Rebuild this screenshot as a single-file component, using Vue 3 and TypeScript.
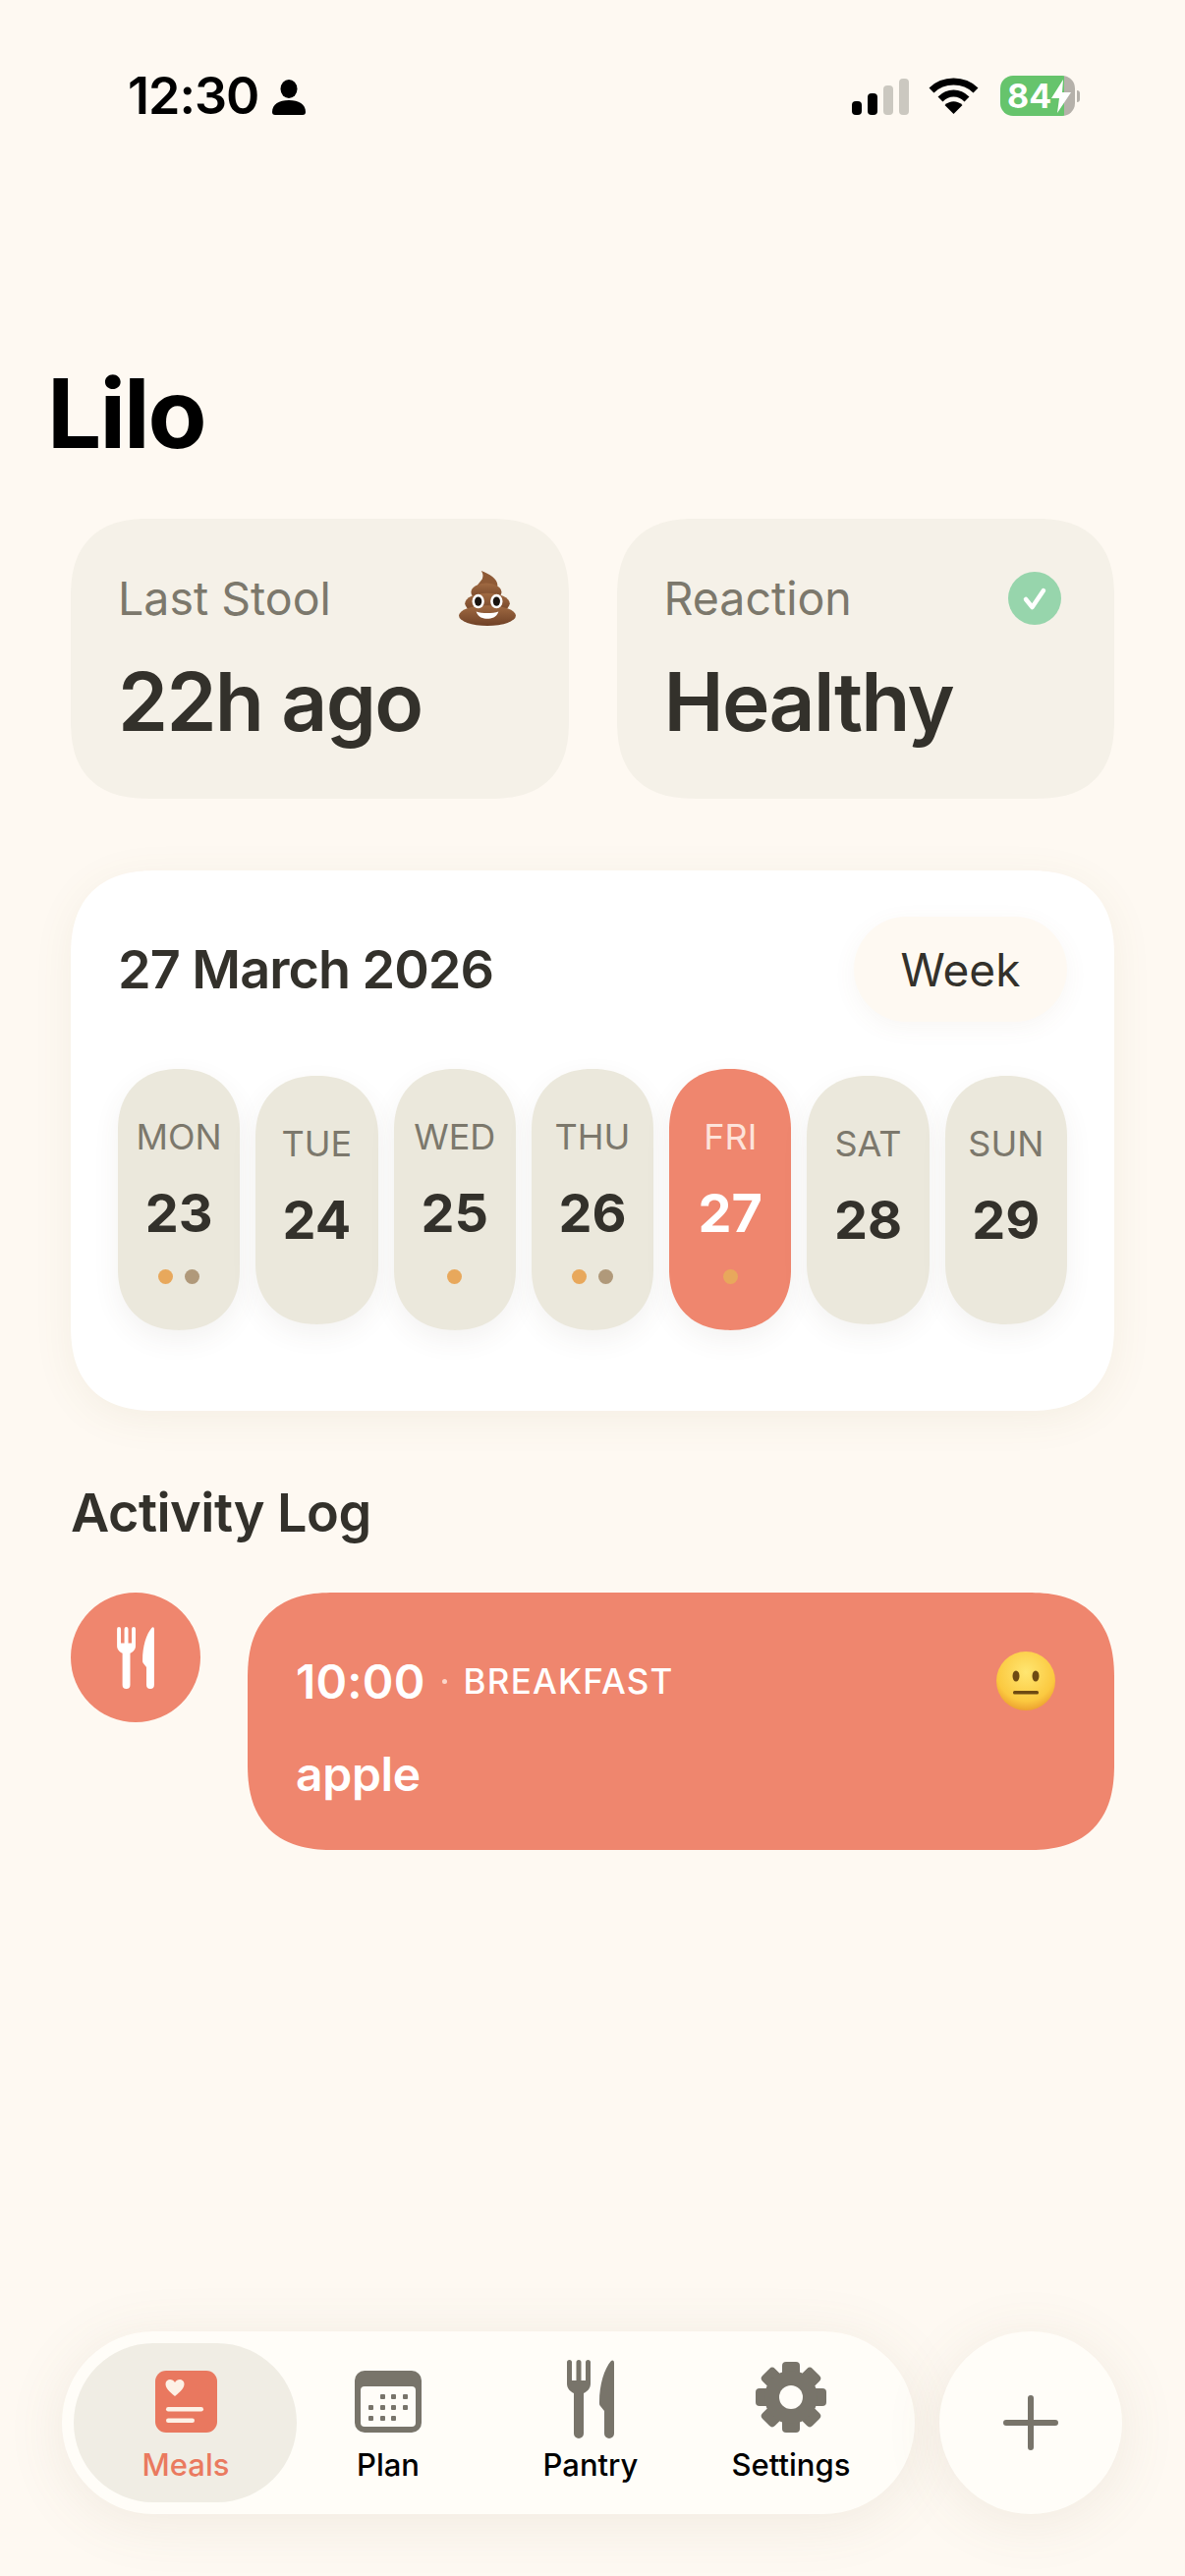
<template>
  <div class="screen">
    <div class="status">
      <div class="status-left">
        <span class="clock">12:30</span>
        <svg class="person" viewBox="0 0 34 36">
          <ellipse cx="17" cy="9.5" rx="8.5" ry="9.5" />
          <path d="M0 33C0 25 7 21 17 21S34 25 34 33C34 35 33 36 31 36H3C1 36 0 35 0 33Z" />
        </svg>
      </div>
      <div class="status-right">
        <div class="signal">
          <i v-for="bar in signalBars" :key="bar.h" :class="{ off: bar.off }" :style="{ height: bar.h + 'px' }"></i>
        </div>
        <svg class="wifi" viewBox="0 0 51 37">
          <path d="M3 13C15 1 36 1 48 13" fill="none" stroke="#000" stroke-width="7" />
          <path d="M12 22C20 14 31 14 39 22" fill="none" stroke="#000" stroke-width="7" />
          <path d="M25.500 37L16.500 28C22 23 29 23 34.500 28Z" />
        </svg>
        <div class="battery">
          <div class="battery-body">
            <span>84</span>
            <svg viewBox="0 0 20 34"><path d="M12 0L0 19H8L6 34L20 13H11Z" fill="#fff" /></svg>
          </div>
          <b></b>
        </div>
      </div>
    </div>

    <h1 class="title">Lilo</h1>

    <div class="stats">
      <div class="stat">
        <div class="stat-top">
          <span>Last Stool</span>
          <svg class="poop" viewBox="0 0 56 54">
            <defs>
              <linearGradient id="brown" x1="0" y1="0" x2="0" y2="1">
                <stop offset="0" stop-color="#a06a42" />
                <stop offset="1" stop-color="#6f4126" />
              </linearGradient>
            </defs>
            <path d="M22 0C30 3 38 8 38 14C38 17 36 19 32 21H18C14 18 20 12 23 8C24 5 24 3 22 0Z" fill="#8e5a36" />
            <ellipse cx="27" cy="21" rx="15" ry="9" fill="url(#brown)" />
            <ellipse cx="28" cy="32" rx="22" ry="10" fill="url(#brown)" />
            <ellipse cx="28" cy="44" rx="28" ry="10" fill="url(#brown)" />
            <ellipse cx="19" cy="30" rx="6" ry="7" fill="#fff" />
            <ellipse cx="37" cy="30" rx="6" ry="7" fill="#fff" />
            <ellipse cx="19" cy="30" rx="3.500" ry="4.500" fill="#1a1410" />
            <ellipse cx="37" cy="30" rx="3.500" ry="4.500" fill="#1a1410" />
            <path d="M17 40C23 42 33 42 39 40C37 46 32 47 28 47S19 46 17 40Z" fill="#fff" />
          </svg>
        </div>
        <div class="stat-value">22h ago</div>
      </div>
      <div class="stat">
        <div class="stat-top">
          <span>Reaction</span>
          <svg class="check" viewBox="0 0 54 54">
            <circle cx="27" cy="27" r="27" fill="#97d5ac" />
            <path d="M18 28L24.500 36L36 19" fill="none" stroke="#fff" stroke-width="4.500" stroke-linecap="round" stroke-linejoin="round" />
          </svg>
        </div>
        <div class="stat-value">Healthy</div>
      </div>
    </div>

    <section class="calendar">
      <div class="calendar-head">
        <h2>27 March 2026</h2>
        <div class="week">Week</div>
      </div>
      <div class="days">
        <div
          v-for="day in days"
          :key="day.name"
          class="day"
          :class="{ selected: day.selected, 'no-dots': day.dots.length === 0 }"
        >
          <span class="day-name">{{ day.name }}</span>
          <span class="day-num">{{ day.num }}</span>
          <div v-if="day.dots.length" class="dots">
            <i v-for="(dot, i) in day.dots" :key="i" :style="{ background: dot }"></i>
          </div>
        </div>
      </div>
    </section>

    <h2 class="log-title">Activity Log</h2>
    <div class="log-row">
      <div class="log-icon">
        <svg viewBox="0 0 48 80"><path :d="forkKnife" fill="#fff" /></svg>
      </div>
      <div class="log-card">
        <div class="log-top">
          <span class="log-time">10:00</span>
          <span class="log-sep"></span>
          <span class="log-meal">BREAKFAST</span>
          <svg class="face" viewBox="0 0 60 60">
            <defs>
              <radialGradient id="yellow" cx=".5" cy=".35" r=".7">
                <stop offset="0" stop-color="#ffe671" />
                <stop offset=".7" stop-color="#fbc940" />
                <stop offset="1" stop-color="#e8962a" />
              </radialGradient>
            </defs>
            <circle cx="30" cy="30" r="30" fill="url(#yellow)" />
            <ellipse cx="20" cy="25" rx="3.500" ry="5.500" fill="#6e4a12" />
            <ellipse cx="40" cy="25" rx="3.500" ry="5.500" fill="#6e4a12" />
            <rect x="17" y="40" width="26" height="3.500" rx="1.500" fill="#6e4a12" />
          </svg>
        </div>
        <div class="log-food">apple</div>
      </div>
    </div>

    <div class="bottom">
      <nav class="tabs">
        <div class="tab active">
          <svg class="tab-icon" width="63" height="63" viewBox="0 0 63 63">
            <rect width="63" height="63" rx="11" fill="#e9785f" />
            <path d="M20 26C14 21 10.500 17.500 10.500 13.500C10.500 10.500 12.800 9 15 9C17 9 19 10 20 12C21 10 23 9 25 9C27.200 9 29.500 10.500 29.500 13.500C29.500 17.500 26 21 20 26Z" fill="#fdf1e6" />
            <rect x="11" y="37" width="38" height="4.500" rx="2.200" fill="#fdf1e6" />
            <rect x="11" y="48.500" width="29" height="4.500" rx="2.200" fill="#fdf1e6" />
          </svg>
          <span>Meals</span>
        </div>
        <div class="tab">
          <svg class="tab-icon" width="68" height="63" viewBox="0 0 68 63">
            <rect width="68" height="63" rx="10" fill="#78746a" />
            <rect x="6" y="16" width="56" height="41" rx="4" fill="#fffdf8" />
            <rect v-for="d in planDots" :key="d.x + '-' + d.y" :x="d.x" :y="d.y" width="5" height="5" rx="1" fill="#78746a" />
          </svg>
          <span>Plan</span>
        </div>
        <div class="tab">
          <svg class="tab-icon pantry" width="48" height="80" viewBox="0 0 48 80"><path :d="forkKnife" fill="#78746a" /></svg>
          <span>Pantry</span>
        </div>
        <div class="tab settings">
          <svg class="tab-icon" width="72" height="72" viewBox="0 0 72 72">
            <rect v-for="a in gearAngles" :key="a" x="27" y="0" width="18" height="18" rx="4" fill="#78746a" :transform="`rotate(${a} 36 36)`" />
            <circle cx="36" cy="36" r="27" fill="#78746a" />
            <circle cx="36" cy="36" r="12" fill="#fffdf8" />
          </svg>
          <span>Settings</span>
        </div>
      </nav>
      <button class="add">
        <svg width="56" height="56" viewBox="0 0 56 56">
          <path d="M3 28H53M28 3V53" fill="none" stroke="#78746a" stroke-width="6" stroke-linecap="round" />
        </svg>
      </button>
    </div>
  </div>
</template>

<script setup lang="ts">
interface Day {
  name: string
  num: number
  dots: string[]
  selected?: boolean
}

const amber = '#e8a85c'
const taupe = '#b0997a'

const days: Day[] = [
  { name: 'MON', num: 23, dots: [amber, taupe] },
  { name: 'TUE', num: 24, dots: [] },
  { name: 'WED', num: 25, dots: [amber] },
  { name: 'THU', num: 26, dots: [amber, taupe] },
  { name: 'FRI', num: 27, dots: [amber], selected: true },
  { name: 'SAT', num: 28, dots: [] },
  { name: 'SUN', num: 29, dots: [] },
]

const signalBars = [
  { h: 14, off: false },
  { h: 22, off: false },
  { h: 30, off: true },
  { h: 37, off: true },
]

const forkKnife =
  'M0 2.500a2.500 2.500 0 0 1 5 0V21h4.500V2.500a2.500 2.500 0 0 1 5 0V21H19V2.500a2.500 2.500 0 0 1 5 0V24C24 29 21 32 17 34V75a5 5 0 0 1-10 0V34C3 32 0 29 0 24Z' +
  'M48 3V75a5 5 0 0 1-10 0V52L34 47C33 46 33 45 33 43C33 25 38 9 45 1C46 0 48 0 48 3Z'

const planDots = [
  { x: 26, y: 24 }, { x: 37, y: 24 }, { x: 49, y: 24 },
  { x: 14, y: 35 }, { x: 26, y: 35 }, { x: 37, y: 35 }, { x: 49, y: 35 },
  { x: 14, y: 46 }, { x: 26, y: 46 }, { x: 37, y: 46 },
]

const gearAngles = [0, 45, 90, 135, 180, 225, 270, 315]
</script>

<style>
html,
body {
  margin: 0;
  background: #fef9f2;
}
</style>

<style scoped>
.screen {
  width: 1206px;
  height: 2622px;
  box-sizing: border-box;
  display: flex;
  flex-direction: column;
  background: #fef9f2;
  padding: 0 72px;
  font-family: Inter, "Liberation Sans", sans-serif;
  color: #33312b;
  overflow: hidden;
}
.status {
  display: flex;
  justify-content: space-between;
  align-items: center;
  height: 41px;
  margin: 77px 35px 0 58px;
}
.status-left {
  display: flex;
  align-items: center;
  gap: 14px;
}
.clock {
  font-size: 52px;
  font-weight: 600;
  color: #000;
  letter-spacing: -1px;
}
.person {
  width: 34px;
  height: 36px;
  margin-top: 2px;
}
.status-right {
  display: flex;
  align-items: center;
}
.signal {
  display: flex;
  align-items: flex-end;
  gap: 6px;
  height: 37px;
  margin-top: 1px;
}
.signal i {
  display: block;
  width: 10px;
  border-radius: 4px;
  background: #000;
}
.signal i.off {
  background: #cbc8c0;
}
.wifi {
  width: 51px;
  height: 37px;
  margin-left: 20px;
}
.battery {
  display: flex;
  align-items: center;
  margin-left: 22px;
}
.battery-body {
  width: 76px;
  height: 41px;
  border-radius: 13px;
  background: linear-gradient(90deg, #66c46c 86%, #b5b1aa 86%);
  display: flex;
  align-items: center;
  padding-left: 7px;
  box-sizing: border-box;
  color: #fff;
  font-size: 34px;
  font-weight: 700;
}
.battery-body svg {
  width: 20px;
  height: 34px;
}
.battery b {
  width: 3px;
  height: 12px;
  margin-left: 2px;
  border-radius: 0 3px 3px 0;
  background: #b5b1aa;
}
.title {
  margin: 245px 0 0 -24px;
  font-size: 98px;
  line-height: 116px;
  font-weight: 700;
  color: #000;
  letter-spacing: -2px;
}
.stats {
  display: flex;
  gap: 49px;
  margin-top: 49px;
}
.stat {
  flex: 1;
  height: 285px;
  box-sizing: border-box;
  padding: 51px 54px 0 48px;
  border-radius: 80px;
  corner-shape: superellipse(1.3);
  background: #f5f1e8;
}
.stat-top {
  display: flex;
  justify-content: space-between;
  align-items: center;
  height: 60px;
  font-size: 46.500px;
  color: #7c786c;
}
.poop {
  width: 58px;
  height: 56px;
}
.check {
  width: 54px;
  height: 54px;
}
.stat-value {
  margin-top: 26px;
  font-size: 82px;
  line-height: 100px;
  font-weight: 600;
  letter-spacing: -1.700px;
}
.calendar {
  margin-top: 73px;
  padding: 47px 48px 82px;
  background: #fff;
  border-radius: 88px;
  corner-shape: superellipse(1.3);
  box-shadow: 0 8px 40px rgba(130, 110, 70, 0.08);
}
.calendar-head {
  display: flex;
  justify-content: space-between;
  align-items: center;
  height: 107px;
}
.calendar-head h2 {
  margin: 0;
  font-size: 54px;
  font-weight: 600;
  letter-spacing: -1px;
}
.week {
  width: 217px;
  height: 107px;
  border-radius: 54px;
  background: #fef9f2;
  box-shadow: 0 6px 24px rgba(130, 110, 70, 0.06);
  display: flex;
  align-items: center;
  justify-content: center;
  font-size: 46px;
}
.days {
  display: flex;
  align-items: center;
  gap: 16px;
  margin-top: 48px;
}
.day {
  flex: 1;
  box-sizing: border-box;
  padding: 46px 0 47px;
  border-radius: 62px;
  corner-shape: superellipse(1.15);
  background: #ebe8dc;
  box-shadow: 0 10px 28px rgba(80, 70, 50, 0.07);
  display: flex;
  flex-direction: column;
  align-items: center;
}
.day.no-dots {
  padding-bottom: 73px;
}
.day.selected {
  background: #ef866e;
  color: #fff;
}
.day-name {
  font-size: 36px;
  line-height: 46px;
  color: #7c786c;
}
.selected .day-name {
  color: #fde3da;
}
.day-num {
  margin-top: 22px;
  font-size: 54px;
  line-height: 66px;
  font-weight: 700;
}
.dots {
  display: flex;
  gap: 12px;
  margin-top: 24px;
}
.dots i {
  display: block;
  width: 15px;
  height: 15px;
  border-radius: 50%;
}
.log-title {
  margin: 66px 0 0;
  font-size: 54px;
  line-height: 76px;
  font-weight: 600;
  letter-spacing: -0.500px;
}
.log-row {
  display: flex;
  align-items: flex-start;
  gap: 48px;
  margin-top: 43px;
}
.log-icon {
  width: 132px;
  height: 132px;
  flex: none;
  border-radius: 50%;
  background: #ef866e;
  display: flex;
  align-items: center;
  justify-content: center;
}
.log-icon svg {
  width: 38px;
  height: 63px;
}
.log-card {
  flex: 1;
  height: 262px;
  box-sizing: border-box;
  padding: 55px 60px 0 49px;
  border-radius: 88px;
  corner-shape: superellipse(1.3);
  background: #ef866e;
  color: #fff;
}
.log-top {
  display: flex;
  align-items: center;
  height: 70px;
}
.log-time {
  font-size: 48px;
  font-weight: 600;
  letter-spacing: 0.200px;
}
.log-sep {
  width: 5px;
  height: 5px;
  margin: 0 17px;
  border-radius: 50%;
  background: #fbd6ca;
}
.log-meal {
  font-size: 35px;
  font-weight: 500;
  letter-spacing: 1.200px;
}
.face {
  width: 60px;
  height: 60px;
  margin-left: auto;
}
.log-food {
  margin-top: 30px;
  font-size: 48px;
  line-height: 60px;
  font-weight: 600;
  letter-spacing: -0.300px;
}
.bottom {
  margin: auto -8px 63px -9px;
  display: flex;
  align-items: center;
  gap: 25px;
}
.tabs {
  width: 871px;
  height: 186px;
  box-sizing: border-box;
  padding: 12px;
  border-radius: 93px;
  background: #fffdf8;
  box-shadow: 0 8px 60px rgba(120, 100, 70, 0.1);
  display: flex;
}
.tab {
  width: 206px;
  flex: none;
  display: flex;
  flex-direction: column;
  align-items: center;
  justify-content: flex-end;
  padding-bottom: 19px;
  box-sizing: border-box;
  font-size: 31px;
  line-height: 38px;
  font-weight: 500;
  color: #000;
}
.tab-icon {
  margin-bottom: 14px;
}
.tab-icon.pantry {
  margin-bottom: 8px;
}
.tab.settings {
  margin-left: -2px;
}
.tab.active {
  width: 227px;
  margin-right: -10px;
  padding-left: 1px;
  border-radius: 81px;
  background: #f0ede4;
  color: #ea7a5f;
}
.add {
  width: 186px;
  height: 186px;
  flex: none;
  padding: 0;
  border: none;
  border-radius: 50%;
  background: #fffdf8;
  box-shadow: 0 8px 60px rgba(120, 100, 70, 0.1);
  display: flex;
  align-items: center;
  justify-content: center;
}
</style>
